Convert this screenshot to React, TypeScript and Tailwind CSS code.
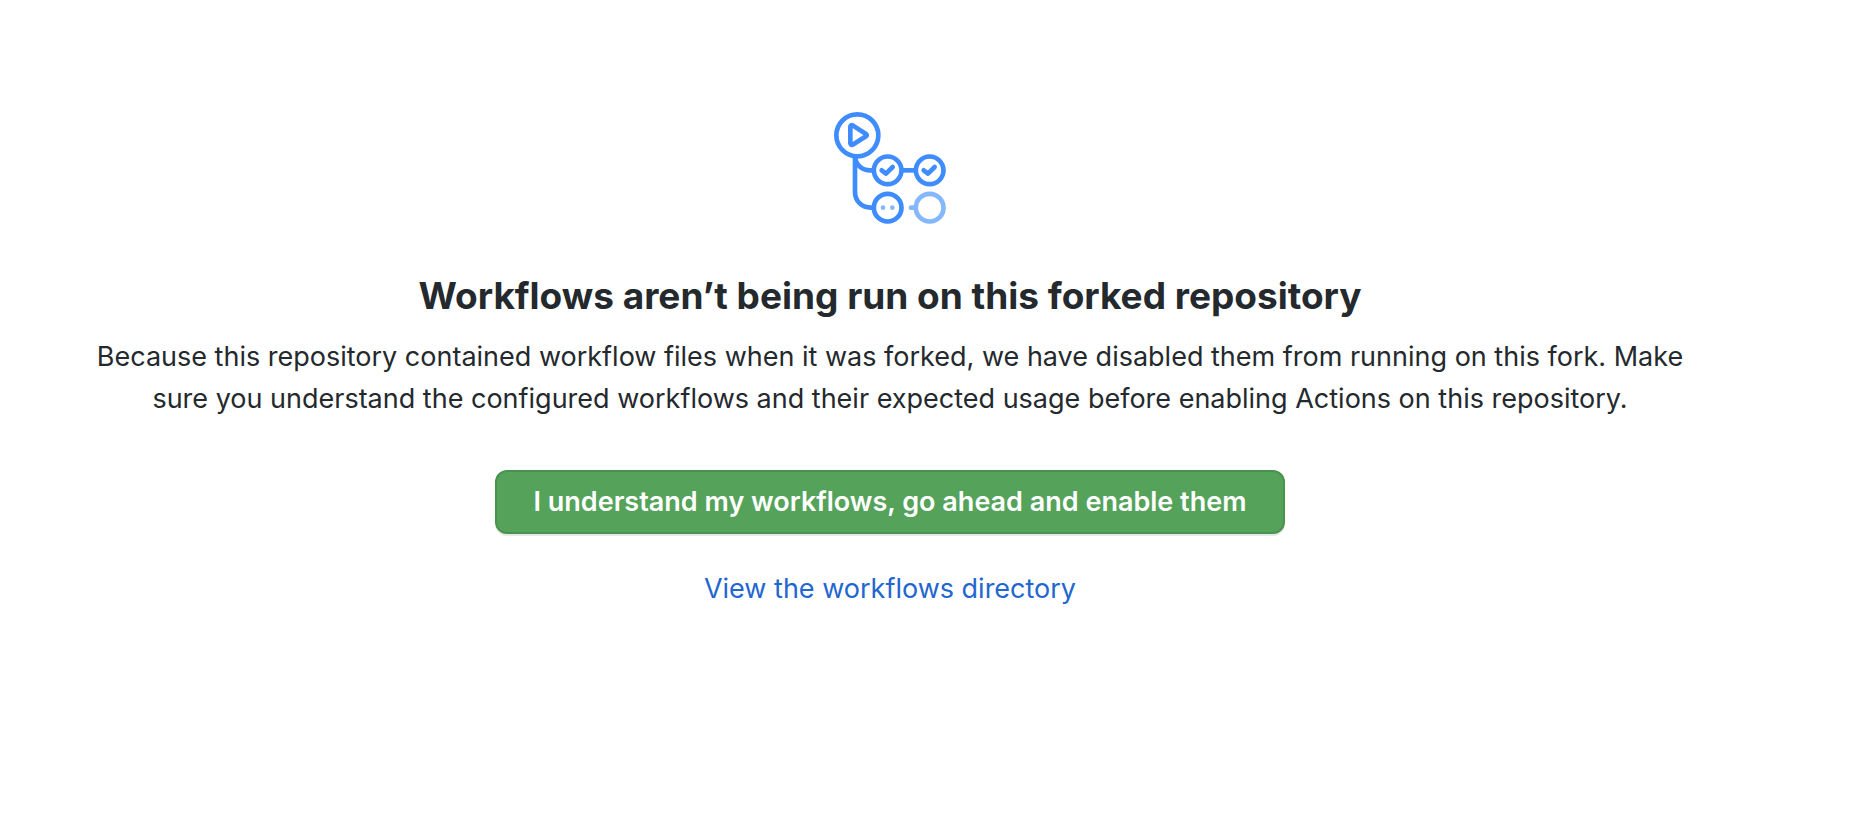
function WorkflowIcon() {
  return (
    <svg
      className="size-28"
      viewBox="42 36 336 336"
      fill="none"
      stroke="#3f8cff"
      strokeWidth="14"
      aria-hidden="true"
    >
      <circle cx="112" cy="106" r="63" />
      <path
        d="M91 80v50c0 4 4 6 7 4l40-25c3-2 3-5 0-7l-40-26c-3-2-7 0-7 4z"
        strokeLinejoin="round"
      />
      <path d="M105 170v105c0 28 20 48 48 48h8" />
      <path d="M105 170c2 24 20 41 46 41h8" />
      <path d="M246 211h40" />
      <circle cx="203" cy="211" r="41.5" />
      <circle cx="329" cy="211" r="41.5" />
      <circle cx="203" cy="323" r="41.5" />
      <g strokeLinecap="round" strokeLinejoin="round">
        <path d="M185 211l13 10 20-20" />
        <path d="M311 211l13 10 20-20" />
      </g>
      <g stroke="none" fill="#85b7fd">
        <circle cx="189" cy="323" r="7" />
        <circle cx="217" cy="323" r="7" />
      </g>
      <g stroke="#85b7fd">
        <circle cx="329" cy="323" r="41.5" />
        <path d="M273 323h10" strokeLinecap="round" />
      </g>
    </svg>
  );
}

export default function App() {
  return (
    <main className="flex min-h-screen flex-col items-center bg-white pt-28 pr-[82px] pb-28 pl-3 text-center font-['Inter','Liberation_Sans',sans-serif] text-[27px] leading-[42px] text-[#24292e]">
      <WorkflowIcon />
      <h1 className="mt-[42px] text-[37px] leading-[60px] font-bold">
        Workflows aren’t being run on this forked repository
      </h1>
      <p className="mt-[10px] max-w-[1640px]">
        Because this repository contained workflow files when it was forked, we have disabled them
        from running on this fork. Make sure you understand the configured workflows and their
        expected usage before enabling Actions on this repository.
      </p>
      <button
        type="button"
        className="mt-[50px] rounded-xl border-2 border-[#4a934f] bg-[#55a25b] px-9 py-[9px] font-semibold text-white shadow-[0_2px_0_rgba(27,31,35,0.1)]"
      >
        I understand my workflows, go ahead and enable them
      </button>
      <a href="#workflows" className="mt-[34px] text-[#2266d0] hover:underline">
        View the workflows directory
      </a>
    </main>
  );
}
